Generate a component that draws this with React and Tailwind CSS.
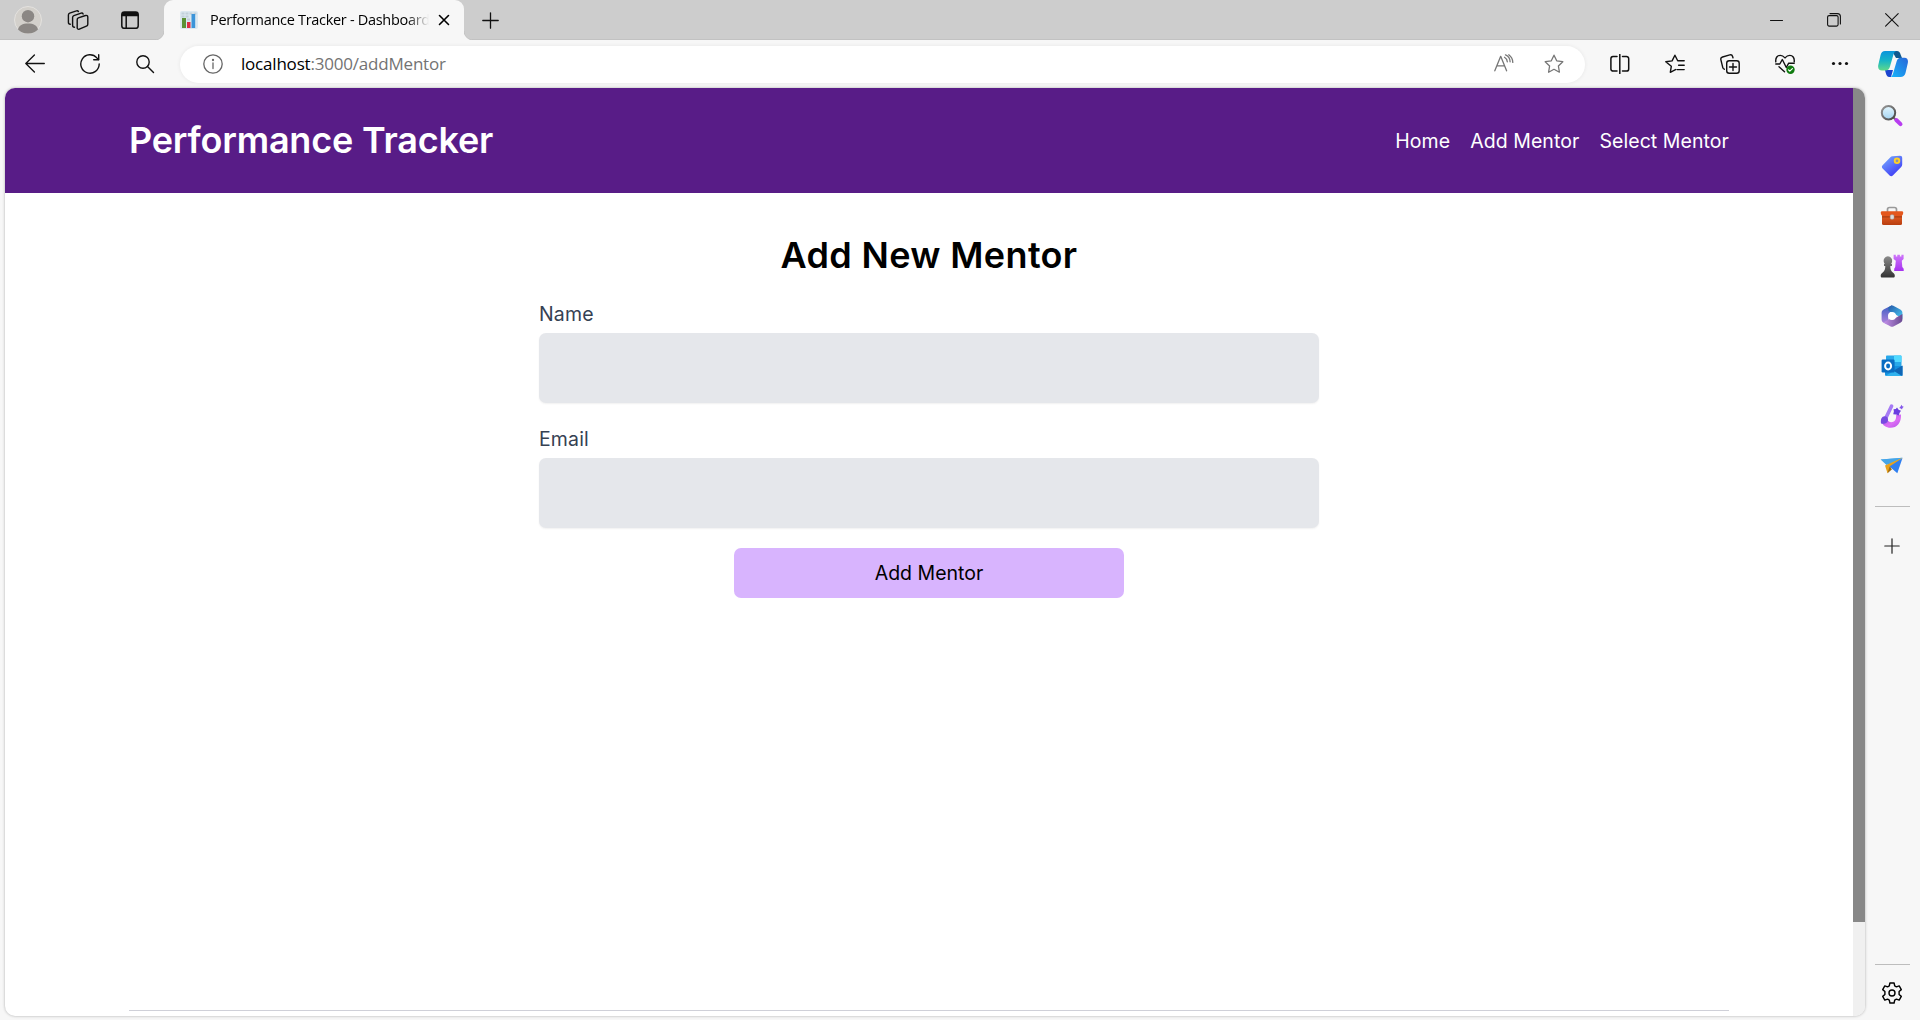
import React from "react";

const line = { fill: "none", stroke: "currentColor", strokeLinecap: "round", strokeLinejoin: "round" };

function Svg({ w = 20, h = 20, sw = 1.3, className = "", children }) {
  return (
    <svg width={w} height={h} viewBox={`0 0 ${w} ${h}`} strokeWidth={sw} {...line} className={`block shrink-0 ${className}`}>
      {children}
    </svg>
  );
}

const STAR = "M10 1.2l2.7 5.6 6.1.9-4.4 4.3 1 6.2L10 15.3l-5.4 2.9 1-6.2L1.2 7.7l6.1-.9z";

function Tab() {
  return (
    <div className="relative flex h-[41px] w-[300px] shrink-0 items-center rounded-t-[9px] bg-[#f7f7f7] pl-4">
      <svg width="9" height="9" viewBox="0 0 9 9" className="absolute -left-[9px] bottom-[1px]">
        <path d="M9 0v9H0A9 9 0 0 0 9 0z" fill="#f7f7f7" />
        <path d="M0 9A9 9 0 0 0 9 0" fill="none" stroke="#bdbdbd" strokeWidth=".8" />
      </svg>
      <svg width="9" height="9" viewBox="0 0 9 9" className="absolute -right-[9px] bottom-[1px]">
        <path d="M0 0v9h9A9 9 0 0 1 0 0z" fill="#f7f7f7" />
        <path d="M9 9A9 9 0 0 1 0 0" fill="none" stroke="#bdbdbd" strokeWidth=".8" />
      </svg>
      <svg width="18" height="18" viewBox="0 0 18 18" className="block shrink-0">
        <rect width="18" height="18" rx="2" fill="#dbe8f0" />
        <path d="M1.5 1.5h3v2h-3zM5.5 1.5h3v2h-3zM9.500 1.500h3v2h-3zM13.500 1.500h3v2h-3zM1.500 4.500h3v2h-3zM5.500 4.500h3v2h-3zM7 7.500h3v2h-3z" fill="#c2d0da" />
        <path d="M2 7h4v10H2z" fill="#5c9136" />
        <path d="M7 11h3.500v6H7z" fill="#dd2e44" />
        <path d="M11.500 3h3.700v14h-3.700z" fill="#3b94d9" />
      </svg>
      <div className="ml-3 w-[219px] overflow-hidden whitespace-nowrap bg-linear-to-r from-black from-90% to-transparent bg-clip-text text-[14.5px] leading-5 tracking-[-0.3px] text-transparent">
        Performance Tracker - Dashboard
      </div>
      <Svg w={12} h={12} sw={1.6} className="ml-[9px] text-black">
        <path d="M1.500 1.500l9 9M10.500 1.500l-9 9" />
      </Svg>
    </div>
  );
}

function TabStrip() {
  return (
    <div className="flex h-10 items-center bg-[#cdcdcd] pl-[14px] text-[#111] shadow-[inset_0_-1px_0_#c2c2c2]">
      <svg width="28" height="28" viewBox="0 0 28 28" className="block shrink-0">
        <circle cx="14" cy="14" r="13.500" fill="#d3d0cb" stroke="#e4e2df" />
        <circle cx="14" cy="10.200" r="6.200" fill="#8b8784" />
        <path d="M4 23.500c1-4.300 4.500-6 10-6s9 1.700 10 6A13.300 13.300 0 0 1 14 27.500 13.300 13.300 0 0 1 4 23.500z" fill="#8b8784" />
      </svg>
      <Svg w={22} h={21} sw={1.4} className="ml-[24.5px]">
        <path d="M11.300 7.800l7.200-2.300a1.700 1.700 0 0 1 2.300 1.600v7.100a2 2 0 0 1-1.400 1.900l-7.100 3.100a1.500 1.500 0 0 1-2.100-1.500V9.700a2 2 0 0 1 1.100-1.900z" />
        <path d="M7.500 17.200a2 2 0 0 1-1.900-2V7.500a2 2 0 0 1 1.300-1.900l7.200-2.400a1.600 1.600 0 0 1 2 .9" />
        <path d="M3.300 14.200a2 2 0 0 1-1.900-2V5.100a2 2 0 0 1 1.300-1.900l6.700-2.300a1.600 1.600 0 0 1 2 .6" />
      </Svg>
      <Svg w={18} h={18} sw={1.5} className="ml-[32.5px]">
        <rect x=".8" y="1" width="16.400" height="16.300" rx="2.600" />
        <path d="M1 3.500A2.500 2.500 0 0 1 3.500 1h11A2.500 2.500 0 0 1 17 3.500V5H1z" fill="currentColor" stroke="none" />
        <path d="M1 4.600h16" /><path d="M5.200 5v12" />
      </Svg>
      <div className="w-[25px] shrink-0" />
      <Tab />
      <Svg w={17} h={17} className="ml-[18px]"><path d="M8.500.8v15.400M.8 8.500h15.400" /></Svg>
      <div className="ml-auto flex items-center gap-11 pr-[21px]">
        <Svg w={13} h={14} sw={1.100}><path d="M.5 7.500h12" /></Svg>
        <Svg w={14} h={14} sw={1.100}>
          <rect x=".6" y="2.600" width="10.500" height="10.500" rx="1.500" />
          <path d="M3 .6h7.400a3 3 0 0 1 3 3V11" />
        </Svg>
        <Svg w={14} h={14} sw={1.100}><path d="M.6.6l12.600 12.600M13.200.6L.6 13.200" /></Svg>
      </div>
    </div>
  );
}

function Toolbar() {
  return (
    <div className="flex h-12 items-center pl-[25px] text-[#111]">
      <div className="flex items-center gap-[35px]">
        <Svg><path d="M19.300 9.500H1M9.400 1L.8 9.500 9.400 18" /></Svg>
        <Svg sw={1.400}><path d="M19.200 10a9.200 9.200 0 1 1-2.300-6.100l1.600 1.700" /><path d="M18.700.8v5h-5" /></Svg>
        <Svg sw={1.400}><circle cx="8" cy="8" r="6.200" /><path d="M12.500 12.500l6 6" /></Svg>
      </div>
      <div className="ml-[25px] flex h-[37px] w-[1405px] shrink-0 items-center rounded-full bg-white pl-[22.5px] shadow-[0_0_4px_rgba(0,0,0,0.07)]">
        <Svg className="text-[#666]">
          <circle cx="10" cy="10" r="9.200" /><path d="M10 9v5.500" /><circle cx="10" cy="6" r=".5" fill="currentColor" />
        </Svg>
        <div className="ml-[18.5px] text-[17px] leading-6 tracking-[-0.2px] text-[#737373]">
          <span className="text-black">localhost</span>:3000/addMentor
        </div>
        <div className="ml-auto flex items-center gap-[30px] pr-[21px] text-[#767676]">
          <Svg>
            <path d="M.8 16.800L6.700 2.300l5.900 14.500M2.900 11.800h7.600" />
            <path d="M10.500 3.200c1.800 1 2.700 2.700 2.800 4.600M11.500.8c3 1.300 4.600 3.900 4.600 7M14.800.8c2.600 1.900 3.900 4.500 4 7.600" />
          </Svg>
          <Svg><path d={STAR} /></Svg>
        </div>
      </div>
      <div className="ml-[24.5px] flex items-center gap-[35px]">
        <Svg sw={1.500}>
          <path d="M9.800.5v19M7 2.500H3A2.200 2.200 0 0 0 .9 4.700v10.200a2.200 2.200 0 0 0 2.200 2.200H7M12.500 2.500h4a2.200 2.200 0 0 1 2.200 2.200v10.200a2.200 2.200 0 0 1-2.200 2.200h-4" />
        </Svg>
        <Svg sw={1.400}>
          <path d="M10.500 15.600l-5.200 2.700 1-6L.8 7.800l6.300-.9L9.900 1.200l2.800 5.600h6.500M13.600 11.200h5.600M12 15.600h7.200" />
        </Svg>
        <Svg sw={1.400}>
          <rect x="6.700" y="6.700" width="12.500" height="12.500" rx="2.500" />
          <path d="M13 9.500v7M9.500 13h7M4.300 15.200a2.300 2.300 0 0 1-1.500-1.600L.9 5.800a2.300 2.300 0 0 1 1.600-2.800L9.800.9a2.300 2.300 0 0 1 2.800 1.600l.4 1.400" />
        </Svg>
        <Svg sw={1.400}>
          <path d="M.8 7.800C.3 3.500 2.500 1.400 5.200 1.400c2 0 3.400.9 4.800 2.500 1.400-1.600 2.800-2.500 4.800-2.500 2.700 0 4.900 2.100 4.400 6.400" />
          <path d="M.8 10h4l2.500-4.500 4 8 2.400-4.300h5.500M4 12.700l5.500 5" />
          <circle cx="15.500" cy="15.800" r="4.200" fill="#107c10" stroke="none" />
          <path d="M13.500 15.900l1.300 1.300 2.600-2.600" stroke="#fff" strokeWidth="1.200" />
        </Svg>
        <Svg><g fill="currentColor" stroke="none"><circle cx="3.500" cy="9.500" r="1.600" /><circle cx="10" cy="9.500" r="1.600" /><circle cx="16.500" cy="9.500" r="1.600" /></g></Svg>
      </div>
      <svg width="30" height="26" viewBox="0 0 30 26" className="ml-7 block shrink-0">
        <defs>
          <linearGradient id="cpA" x1="0" y1="0" x2="0" y2="1"><stop offset="0" stopColor="#0a94dc" /><stop offset=".5" stopColor="#17b5c6" /><stop offset="1" stopColor="#5fd98a" /></linearGradient>
          <linearGradient id="cpB" x1="1" y1="0" x2="0" y2="1"><stop offset="0" stopColor="#2866d8" /><stop offset="1" stopColor="#16b6fb" /></linearGradient>
        </defs>
        <path d="M14 0h5c2 0 3 1.500 3.600 3.500L24 7h-6z" fill="#11598f" />
        <path d="M7 19h8l-2 7h-1.500C9 26 8.400 24 7.800 22z" fill="#1b45cf" />
        <path d="M7 0h11.500C16.500.3 16 2 15.300 4L12 15.500C11.200 18 10 19.500 7.500 19.500H4C.8 19.500-.5 17 .4 13.500L2.600 4C3.300 1.500 4.700 0 7 0z" fill="url(#cpA)" />
        <path d="M22.500 26H12c2 0 2.500-1.700 3.200-4L18.600 10.500C19.400 8 20.500 6.800 23 6.800h3.500c3 0 4 2.400 3.200 5.700L27.500 22c-.7 2.500-2.500 4-5 4z" fill="url(#cpB)" />
      </svg>
    </div>
  );
}

const sideIcons = [
  <svg key="search" width="24" height="24" viewBox="0 0 24 24">
    <defs>
      <linearGradient id="ln" x1="0" y1="0" x2="0" y2="1"><stop stopColor="#e4f6fd" /><stop offset="1" stopColor="#a5d5f2" /></linearGradient>
      <linearGradient id="rim" x1="0" y1="0" x2="1" y2="1"><stop stopColor="#999" /><stop offset="1" stopColor="#444" /></linearGradient>
    </defs>
    <path d="M13.500 13.500l3 3" stroke="#666" strokeWidth="2" />
    <path d="M16.300 16l4.200 4.200" stroke="#b83df0" strokeWidth="4" strokeLinecap="round" />
    <circle cx="8.500" cy="8.700" r="6.700" fill="url(#ln)" stroke="url(#rim)" strokeWidth="2" />
  </svg>,
  <svg key="tag" width="22" height="22" viewBox="0 0 22 22">
    <defs><linearGradient id="tg" x1="0" y1="0" x2=".7" y2="1"><stop stopColor="#7ab3ff" /><stop offset="1" stopColor="#3d38f5" /></linearGradient></defs>
    <path d="M11.500 1.200L19 .8c1.500 0 2.200.8 2.200 2.200v6.500c0 1-.3 1.700-1 2.400l-8.400 8.500c-1 1-2.200 1-3.200 0l-7-7c-1-1-1-2.200 0-3.200l7.800-8c.6-.6 1.200-.9 2.100-1z" fill="url(#tg)" />
    <circle cx="16" cy="5.800" r="2.300" fill="#8d93a8" stroke="#ffd026" strokeWidth="1.900" />
  </svg>,
  <svg key="tools" width="24" height="20" viewBox="0 0 24 20">
    <defs><linearGradient id="bx" x1="0" y1="0" x2="0" y2="1"><stop stopColor="#ef6427" /><stop offset="1" stopColor="#b83e10" /></linearGradient></defs>
    <path d="M7.500 6V3.500A2 2 0 0 1 9.500 1.500h5a2 2 0 0 1 2 2V6" fill="none" stroke="#999" strokeWidth="1.700" />
    <rect x="2" y="7" width="20" height="12" rx="1.500" fill="url(#bx)" />
    <path d="M1.800 5.300h20.400c.8 0 1.200 1 1 2-.4 2.300-1.700 3.200-4 3.200H4.800c-2.300 0-3.600-.9-4-3.200-.2-1 .2-2 1-2z" fill="#e4571d" />
    <path d="M2 10.900h20" stroke="#8e300c" strokeWidth=".8" />
    <rect x="10.200" y="8.800" width="3.800" height="4.400" rx="1.200" fill="#ddd" stroke="#999" strokeWidth=".5" />
  </svg>,
  <svg key="games" width="24" height="24" viewBox="0 0 24 24">
    <defs>
      <linearGradient id="rk" x1="0" y1="0" x2="0" y2="1"><stop stopColor="#cf77fa" /><stop offset="1" stopColor="#a632ef" /></linearGradient>
      <linearGradient id="pw" x1="0" y1="0" x2="0" y2="1"><stop stopColor="#8b8b8b" /><stop offset="1" stopColor="#333" /></linearGradient>
    </defs>
    <path d="M13.600.7h2.200v1.800h1.500V.7h2.600v1.800h1.500V.7h2.200v4.200l-1.800 1.800.5 6.300 1.400 1.800v2.200h-9.500v-2.200l1-1.800.6-6.300-2.200-1.800z" fill="url(#rk)" />
    <path d="M3.700 7.500a4.300 4.300 0 1 1 8.400 0c0 1-.5 1.800-1 2.500H12v2h-1.700c0 3 .6 5 2.500 6.500 1.400.8 2 2 2 3.200 0 1.200-.4 1.800-1.300 1.800H2c-.9 0-1.300-.6-1.300-1.800 0-1.200.7-2.400 2-3.200C4.700 17 5.300 15 5.300 12H4v-2h.8c-.6-.7-1.100-1.500-1.100-2.500z" fill="url(#pw)" />
  </svg>,
  <svg key="m365" width="22" height="22" viewBox="0 0 22 22">
    <defs>
      <linearGradient id="ma" x1="0" y1="0" x2="0" y2="1"><stop stopColor="#3b5ec4" /><stop offset="1" stopColor="#b786dd" /></linearGradient>
      <linearGradient id="mb" x1="0" y1="0" x2="1" y2="1"><stop stopColor="#2459a8" /><stop offset="1" stopColor="#49cdf6" /></linearGradient>
      <linearGradient id="mc" x1="0" y1="0" x2="1" y2="0"><stop stopColor="#c492ea" /><stop offset="1" stopColor="#694a91" /></linearGradient>
    </defs>
    <path d="M11 .2L3 4.300C1.500 5.100.6 6 .6 8v6.500c0 1.600.8 2.600 2 3.200l4 2.100L8 9l3-4z" fill="url(#ma)" />
    <path d="M7.500 6V2.300L10 .8c.8-.5 1.500-.5 2.300 0l7 3.700c1.400.8 2.100 1.800 2.100 3.500v6L14 9z" fill="url(#mb)" />
    <path d="M2.500 17.500L9 13.500l5.500-.5 6.900-4v5.500c0 1.500-.7 2.500-2 3.200l-7 3.700c-1 .5-1.800.5-2.800 0z" fill="url(#mc)" />
    <circle cx="11" cy="11" r="4" fill="#fff" />
  </svg>,
  <svg key="outlook" width="22" height="22" viewBox="0 0 22 22">
    <path d="M5 1.500C5 1 5.500.5 6 .5h13.500c.6 0 1 .5 1 1V12H5z" fill="#28a8ea" />
    <path d="M13 .5h6.500c.6 0 1 .5 1 1V7H13z" fill="#50d9ff" />
    <path d="M4 11h17.500v8.500c0 .8-.6 1.500-1.500 1.500H5.500C4.600 21 4 20.300 4 19.500z" fill="#1490df" />
    <path d="M21.500 10.500L12 16l9.500 5z" fill="#1066b5" />
    <path d="M4 21l9-5 7.500 5z" fill="#31b2ee" />
    <rect x=".6" y="4.500" width="13" height="13" rx="1.200" fill="#0a6dc2" />
    <ellipse cx="7.100" cy="11" rx="3" ry="3.400" fill="none" stroke="#fff" strokeWidth="2" />
  </svg>,
  <svg key="designer" width="24" height="24" viewBox="0 0 24 24">
    <defs><linearGradient id="ds" x1="0" y1="0" x2="1" y2="1"><stop stopColor="#9a4fe8" /><stop offset=".6" stopColor="#dc6df4" /><stop offset="1" stopColor="#b04fe8" /></linearGradient></defs>
    <path d="M1.500 17c1 4.500 4.500 6.800 9 6.800 6.500 0 11-5 10.500-13.300l-4.800.5c.3 4.800-2 7.200-5 7.200-1.800 0-3-.8-3.700-2.700z" fill="url(#ds)" />
    <path d="M11.500 2.200L6.300 13" stroke="#a67bf5" strokeWidth="3.600" strokeLinecap="round" />
    <path d="M1 19.500c-.7-4.300.8-7 3.600-7.200 2.200-.1 3.600 1.500 3.400 3.700-.3 3.200-3.500 4.500-7 3.500z" fill="#764ae0" />
    <path d="M17 3.500l1.600 2.200 2.400 1-1.500 2.200-.8 2.600-2.700-1-2.800-.2.700-2.700-.4-2.400 2.300-.2z" fill="#6a3de0" />
    <path d="M21.500.8l.8 1.500 1.500.5-1.300 1.200-.5 1.600-1.200-1.200-1.600-.4 1.200-1.200z" fill="#8457ea" />
  </svg>,
  <svg key="drop" width="24" height="18" viewBox="0 0 24 18">
    <path d="M.7 2.500L22.500.8 10 9z" fill="#51b3f0" />
    <path d="M.7 2.500L22.500.8 6.500 8z" fill="#46a5e8" />
    <path d="M22.500.8L5 8.500l2.500 7.700L11 11z" fill="#e9a21b" />
    <path d="M22.500 1L9.500 9.500l7.800 6.800z" fill="#2f7ff0" />
    <path d="M9.500 9.800l-2 6.400 4.500-4z" fill="#a06b10" />
  </svg>,
];

function Sidebar() {
  return (
    <aside className="flex w-[55px] shrink-0 flex-col items-center pt-[2.5px] pr-px text-[#222]">
      {sideIcons.map((icon) => (
        <div key={icon.key} className="flex h-[50px] w-full items-center justify-center">{icon}</div>
      ))}
      <div className="mt-[15.5px] ml-px h-px w-[35px] bg-[#bdbdbd]" />
      <Svg w={16} h={16} sw={1.200} className="mt-[30.5px]"><path d="M8 .8v14.400M.8 8h14.400" /></Svg>
      <div className="mt-auto ml-px h-px w-[35px] bg-[#bdbdbd]" />
      <Svg w={22} h={22} sw={1.400} className="mt-[16.5px] mb-[16.5px] text-black">
        <circle cx="11" cy="11" r="3" />
        <path d="M8.900 1h4.200l.6 2.900 1.700 1 2.800-1 2.100 3.700-2.200 1.900v3l2.200 1.900-2.100 3.700-2.800-1-1.700 1-.6 2.900H8.900l-.6-2.900-1.700-1-2.800 1-2.100-3.700 2.200-1.900v-3L1.700 7.600l2.100-3.700 2.800 1 1.700-1z" />
      </Svg>
    </aside>
  );
}

function Field({ label, id }) {
  return (
    <div className="w-full">
      <label htmlFor={id} className="block pt-px text-[19.5px] leading-[30px] tracking-[0.15px] text-gray-700">{label}</label>
      <input id={id} className="mt-1 block h-[70px] w-full rounded-[7px] bg-[#e5e7eb] px-4 shadow-[0_1px_2px_rgba(0,0,0,0.06)] outline-none" />
    </div>
  );
}

function Page() {
  return (
    <div className="flex min-w-0 flex-1 overflow-hidden rounded-[10px] bg-white shadow-[0_0_3px_rgba(0,0,0,0.3)]">
      <div className="flex w-[1848px] flex-col font-[Inter,sans-serif]">
        <header className="flex h-[105px] shrink-0 items-center justify-between bg-[#581c87] px-[124px] text-white">
          <h1 className="pb-[2px] text-4xl font-semibold tracking-[-0.2px]">Performance Tracker</h1>
          <nav className="flex gap-5 pt-[2px] text-[19.5px] tracking-[0.07px]">
            <a>Home</a>
            <a>Add Mentor</a>
            <a>Select Mentor</a>
          </nav>
        </header>
        <main className="mx-auto flex w-[780px] flex-1 flex-col items-center pt-10">
          <h2 className="text-[36px] leading-[45px] font-semibold tracking-[0.35px] text-black">Add New Mentor</h2>
          <form className="mt-5 flex w-full flex-col items-center">
            <Field label="Name" id="name" />
            <div className="h-5" />
            <Field label="Email" id="email" />
            <button type="button" className="mt-5 h-[50px] w-[390px] rounded-[7px] bg-[#d8b4fe] pt-[2px] text-[19.5px] text-black">Add Mentor</button>
          </form>
        </main>
        <footer className="mx-[124px] h-[6px] shrink-0 border-t border-[#cfd0d8]" />
      </div>
      <div className="w-3 shrink-0 bg-[#f0f0f0]">
        <div className="h-[834px] bg-[#888]" />
      </div>
    </div>
  );
}

export default function App() {
  return (
    <div className="flex h-[1020px] w-[1920px] flex-col overflow-hidden bg-[#f7f7f7] font-['Open_Sans',sans-serif]">
      <TabStrip />
      <Toolbar />
      <div className="flex min-h-0 flex-1">
        <div className="flex min-w-0 flex-1 pb-[4px] pl-[5px]">
          <Page />
        </div>
        <Sidebar />
      </div>
    </div>
  );
}
